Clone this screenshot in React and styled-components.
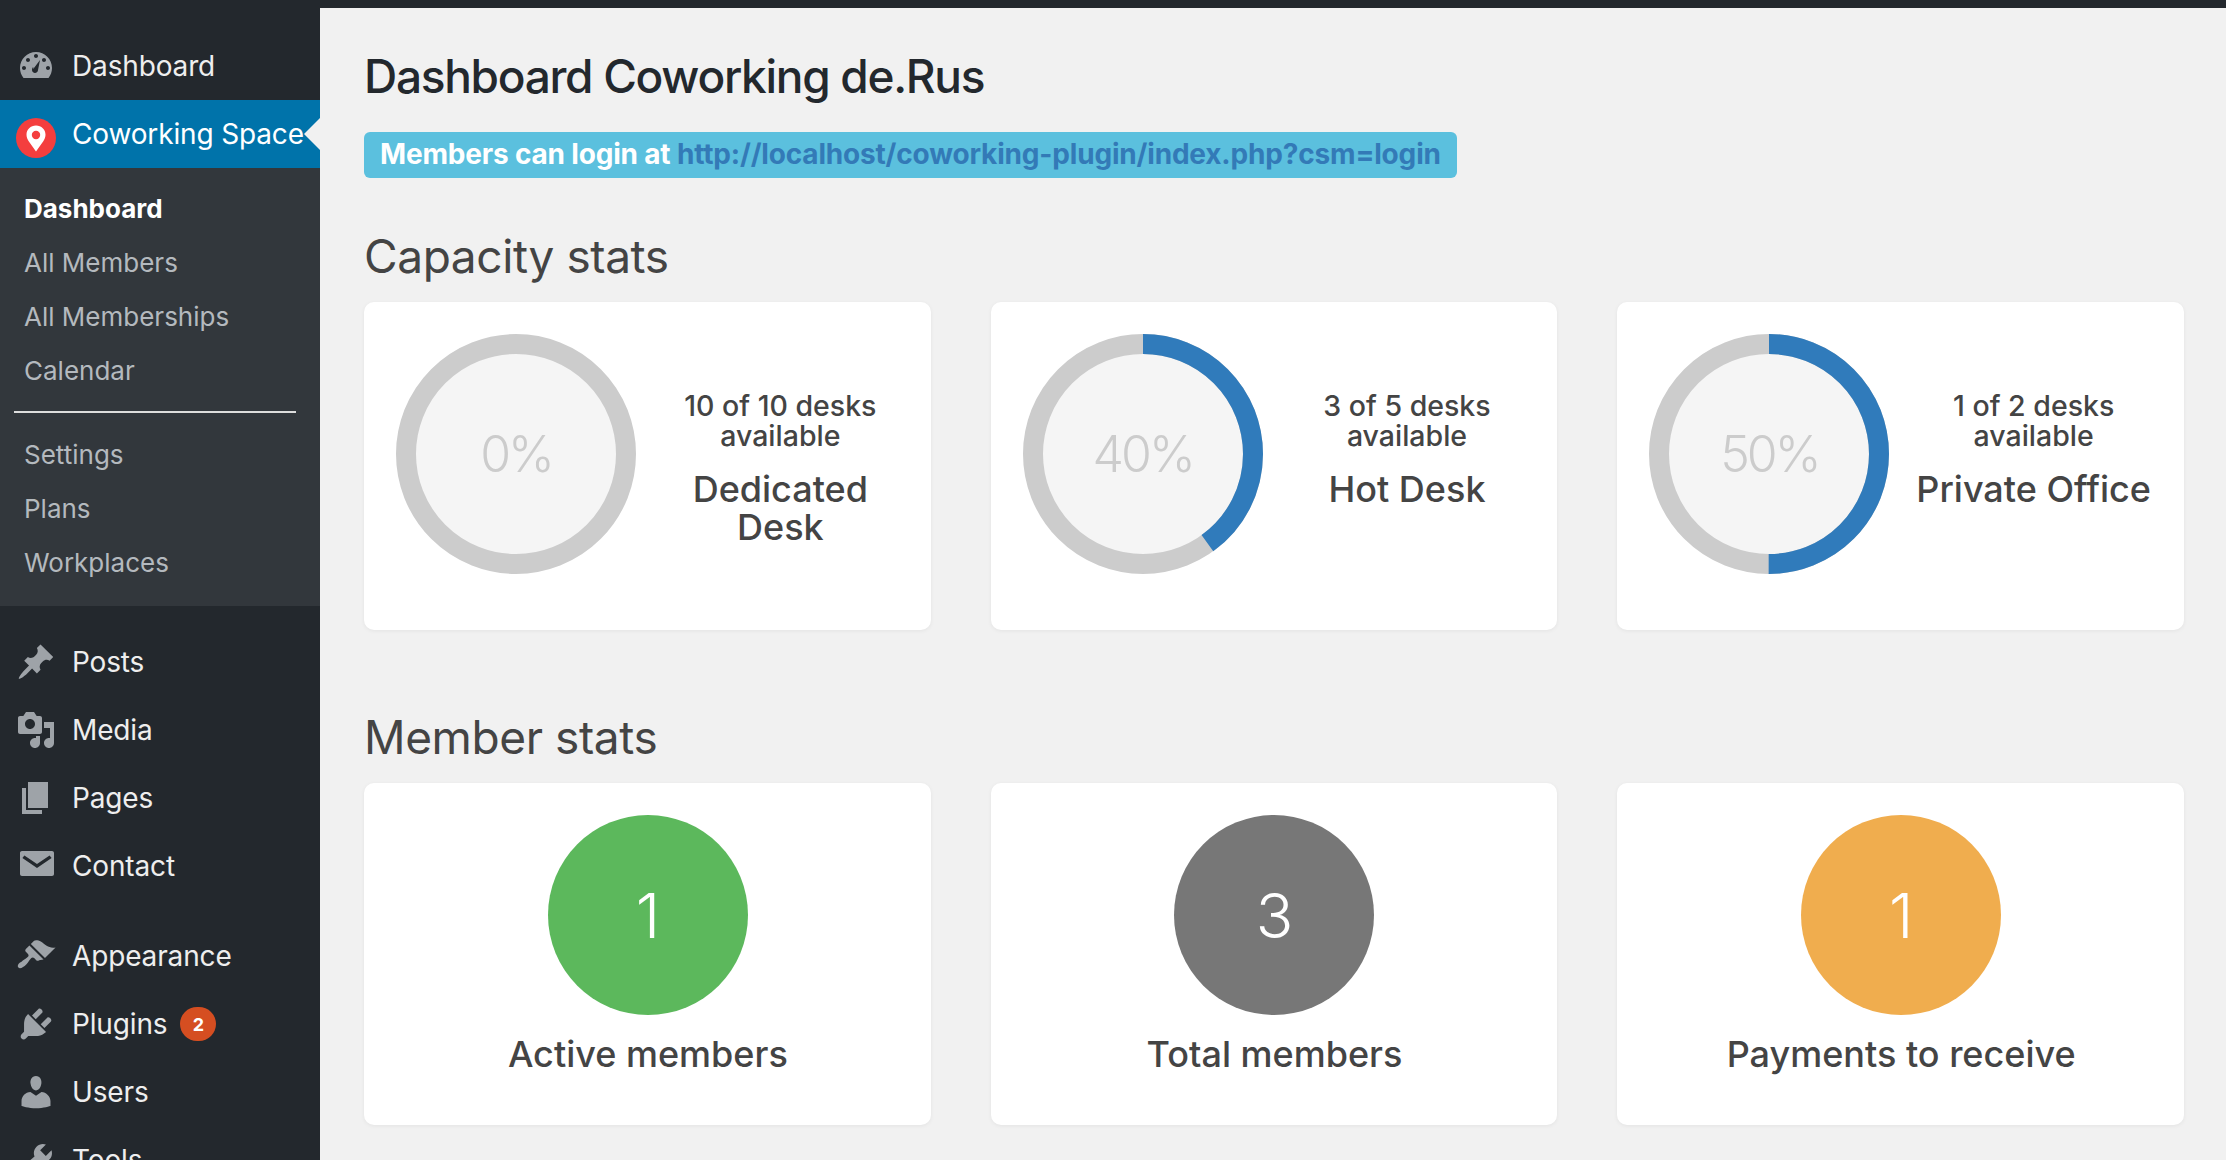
import styled, { createGlobalStyle } from "styled-components"

const GlobalStyle = createGlobalStyle`
    html, body {
        margin: 0;
        height: 100%;
        overflow: hidden;
        background: #f1f1f1;
    }
    * {
        box-sizing: border-box;
    }
`

const icons = {
    dashboard: "M3.76 16h12.48c1.1-1.37 1.76-3.11 1.76-5 0-4.42-3.58-8-8-8s-8 3.58-8 8c0 1.89.66 3.63 1.76 5zM10 4c.55 0 1 .45 1 1s-.45 1-1 1-1-.45-1-1 .45-1 1-1zM6 6c.55 0 1 .45 1 1s-.45 1-1 1-1-.45-1-1 .45-1 1-1zm8 0c.55 0 1 .45 1 1s-.45 1-1 1-1-.45-1-1 .45-1 1-1zm-5.370 5.550L12 7l-1 5c0 .83-.67 1.500-1.500 1.500S8 12.830 8 12c0-.57.24-1.080.63-1.450zM4 10c.55 0 1 .45 1 1s-.45 1-1 1-1-.45-1-1 .45-1 1-1zm12 0c.55 0 1 .45 1 1s-.45 1-1 1-1-.45-1-1 .45-1 1-1z",
    posts: "M10.44 3.02l1.82-1.82 6.36 6.35-1.83 1.82c-1.05-.68-2.48-.57-3.41.36l-.75.75c-.92.93-1.04 2.35-.35 3.41l-1.83 1.82-2.41-2.41-2.8 2.79c-.42.42-3.38 2.71-3.8 2.29s1.86-3.39 2.28-3.81l2.79-2.79L4.1 9.36l1.83-1.82c1.05.69 2.48.57 3.4-.36l.75-.75c.93-.92 1.05-2.35.36-3.41z",
    media: "M13 11V4c0-.55-.45-1-1-1h-1.67L9 1H5L3.67 3H2c-.55 0-1 .45-1 1v7c0 .55.45 1 1 1h10c.55 0 1-.45 1-1zM7 4.5c1.38 0 2.5 1.12 2.5 2.5S8.38 9.5 7 9.5 4.5 8.38 4.5 7 5.62 4.5 7 4.5zM14 6h5v10.5c0 1.38-1.12 2.5-2.5 2.5S14 17.88 14 16.5s1.12-2.5 2.5-2.5c.17 0 .34.02.5.05V9h-3V6zm-4 8.05V13h2v3.5c0 1.38-1.12 2.5-2.5 2.5S7 17.88 7 16.5 8.12 14 9.5 14c.17 0 .34.02.5.05z",
    pages: "M6 15V2h10v13H6zm-1 1h8v2H3V5h2v11z",
    contact: "M3 2.5h15c.55 0 1 .45 1 1v10.5c0 .55-.45 1-1 1H3c-.55 0-1-.45-1-1V3.500c0-.55.45-1 1-1zm1.200 2.200L3.200 6l7.300 5 7.300-5-1-1.300-6.300 4.300z",
    appearance: "M14.48 11.06L7.41 3.99l1.5-1.5c.5-.56 2.3-.47 3.51.32 1.21.8 1.43 1.28 2.91 2.1 1.18.64 2.45 1.26 4.45.85zm-.71.71L6.7 4.7 4.93 6.47c-.39.39-.39 1.02 0 1.41l1.06 1.06c.39.39.39 1.03 0 1.42-.6.6-1.43 1.11-2.21 1.69-.35.26-.7.53-1.01.84C1.43 13.23.4 14.95 1.2 15.8c.85.85 2.57-.18 3.92-1.54.31-.31.58-.66.85-1.02.57-.78 1.08-1.6 1.69-2.21.39-.39 1.02-.39 1.41 0l1.06 1.06c.39.39 1.02.39 1.41 0z",
    plugins: "M13.11 4.36L9.87 7.6 8 5.73l3.24-3.24c.35-.34 1.05-.2 1.56.32.52.51.66 1.21.31 1.55zm-8 1.77l.91-1.12 9.01 9.01-1.19.84c-.71.71-2.63 1.16-3.82 1.16H6.14L4.9 17.26c-.59.59-1.54.59-2.12 0-.59-.58-.59-1.53 0-2.12l1.24-1.24v-3.88c0-1.13.4-3.19 1.09-3.89zm7.26 3.97l3.24-3.24c.34-.35 1.04-.21 1.55.31.52.51.66 1.21.31 1.55l-3.24 3.25z",
    users: "M10 9.25c-2.27 0-2.73-3.44-2.73-3.44C7 4.02 7.82 2 9.97 2c2.16 0 2.98 2.02 2.71 3.81 0 0-.41 3.44-2.68 3.44zm0 2.57L12.72 10c2.39 0 4.52 2.33 4.52 4.53v2.49s-3.65 1.13-7.24 1.13c-3.65 0-7.24-1.13-7.24-1.13v-2.49c0-2.25 1.94-4.48 4.47-4.48z",
    tools: "M16.68 9.77c-1.34 1.34-3.3 1.67-4.95.99l-5.41 6.52c-.99.99-2.59.99-3.58 0s-.99-2.59 0-3.57l6.52-5.42c-.68-1.65-.35-3.61.99-4.95 1.28-1.28 3.12-1.62 4.72-1.06l-2.89 2.89 2.82 2.82 2.86-2.87c.53 1.58.18 3.39-1.08 4.65zM3.81 16.21c.4.39 1.04.39 1.43 0 .4-.4.4-1.04 0-1.43-.39-.4-1.03-.4-1.43 0-.39.39-.39 1.03 0 1.43z",
}

const capacity = [
    { percent: 0, free: "10 of 10 desks available", name: "Dedicated Desk" },
    { percent: 40, free: "3 of 5 desks available", name: "Hot Desk" },
    { percent: 50, free: "1 of 2 desks available", name: "Private Office" },
]

const members = [
    { value: 1, label: "Active members", color: "#5cb85c" },
    { value: 3, label: "Total members", color: "#777777" },
    { value: 1, label: "Payments to receive", color: "#f0ad4e" },
]

function MenuIcon({ name }) {
    return (
        <IconBox viewBox="0 0 20 20">
            <path d={icons[name]} fillRule="evenodd" fill="#9ea3a8" />
        </IconBox>
    )
}

function Ring({ percent }) {
    const length = 2 * Math.PI * 110
    return (
        <RingBox>
            <svg width="240" height="240" viewBox="0 0 240 240">
                <circle cx="120" cy="120" r="110" fill="#f5f5f5" stroke="#cccccc" strokeWidth="20" />
                {percent > 0 && (
                    <circle
                        cx="120"
                        cy="120"
                        r="110"
                        fill="none"
                        stroke="#307bbb"
                        strokeWidth="20"
                        strokeDasharray={`${(length * percent) / 100} ${length}`}
                        transform="rotate(-90 120 120)"
                    />
                )}
            </svg>
            <RingLabel>{percent}%</RingLabel>
        </RingBox>
    )
}

export default function App() {
    return (
        <>
            <GlobalStyle />
            <Page>
                <TopBar />
                <Body>
                    <Sidebar>
                        <MenuGroup $top={24}>
                            <MenuRow>
                                <MenuIcon name="dashboard" />
                                Dashboard
                            </MenuRow>
                            <MenuRow $active>
                                <PinBadge viewBox="0 0 40 40">
                                    <circle cx="20" cy="20" r="20" fill="#f43e3e" />
                                    <path
                                        d="M20 7.500c-5.400 0-9.500 4-9.500 9.200 0 2.500 1 4.500 2.200 6.600L20 33.500l7.300-10.200c1.200-2.100 2.200-4.100 2.200-6.600 0-5.200-4.100-9.200-9.500-9.200zm0 5.300a4.200 4.200 0 1 1 0 8.400 4.200 4.200 0 0 1 0-8.400z"
                                        fillRule="evenodd"
                                        fill="#ffffff"
                                    />
                                </PinBadge>
                                Coworking Space
                                <ActiveArrow />
                            </MenuRow>
                        </MenuGroup>
                        <SubMenu>
                            <SubRow $current>Dashboard</SubRow>
                            <SubRow>All Members</SubRow>
                            <SubRow>All Memberships</SubRow>
                            <SubRow>Calendar</SubRow>
                            <SubDivider />
                            <SubRow>Settings</SubRow>
                            <SubRow>Plans</SubRow>
                            <SubRow>Workplaces</SubRow>
                        </SubMenu>
                        <MenuGroup $top={22}>
                            <MenuRow><MenuIcon name="posts" />Posts</MenuRow>
                            <MenuRow><MenuIcon name="media" />Media</MenuRow>
                            <MenuRow><MenuIcon name="pages" />Pages</MenuRow>
                            <MenuRow><MenuIcon name="contact" />Contact</MenuRow>
                        </MenuGroup>
                        <MenuGroup $top={22}>
                            <MenuRow><MenuIcon name="appearance" />Appearance</MenuRow>
                            <MenuRow>
                                <MenuIcon name="plugins" />
                                Plugins
                                <CountBadge>2</CountBadge>
                            </MenuRow>
                            <MenuRow><MenuIcon name="users" />Users</MenuRow>
                            <MenuRow><MenuIcon name="tools" />Tools</MenuRow>
                        </MenuGroup>
                    </Sidebar>
                    <Content>
                        <Title>Dashboard Coworking de.Rus</Title>
                        <LoginNote>
                            Members can login at <NoteLink href="#">http://localhost/coworking-plugin/index.php?csm=login</NoteLink>
                        </LoginNote>
                        <SectionTitle $top={50}>Capacity stats</SectionTitle>
                        <CardGrid>
                            {capacity.map((desk) => (
                                <CapacityCard key={desk.name}>
                                    <Ring percent={desk.percent} />
                                    <DeskInfo>
                                        <DeskCount>{desk.free}</DeskCount>
                                        <DeskName>{desk.name}</DeskName>
                                    </DeskInfo>
                                </CapacityCard>
                            ))}
                        </CardGrid>
                        <SectionTitle $top={79}>Member stats</SectionTitle>
                        <CardGrid>
                            {members.map((stat) => (
                                <MemberCard key={stat.label}>
                                    <StatCircle $color={stat.color}>{stat.value}</StatCircle>
                                    <StatLabel>{stat.label}</StatLabel>
                                </MemberCard>
                            ))}
                        </CardGrid>
                    </Content>
                </Body>
            </Page>
        </>
    )
}

const Page = styled.div`
    display: flex;
    flex-direction: column;
    height: 100vh;
    overflow: hidden;
    font-family: Inter, "Liberation Sans", sans-serif;
    background: #f1f1f1;
`
const TopBar = styled.div`
    flex: none;
    height: 8px;
    background: #23282d;
`
const Body = styled.div`
    display: flex;
    flex: 1;
    min-height: 0;
`
const Sidebar = styled.nav`
    flex: none;
    width: 320px;
    background: #23282d;
    overflow: hidden;
`
const MenuGroup = styled.div`
    padding-top: ${(props) => props.$top}px;
`
const MenuRow = styled.div`
    position: relative;
    display: flex;
    align-items: center;
    gap: 16px;
    height: 68px;
    padding-left: 16px;
    font-size: 28px;
    letter-spacing: -0.15px;
    white-space: nowrap;
    color: ${(props) => (props.$active ? "#ffffff" : "#eeeeee")};
    background: ${(props) => (props.$active ? "#0073aa" : "transparent")};
`
const IconBox = styled.svg`
    flex: none;
    width: 40px;
    height: 40px;
`
const PinBadge = styled.svg`
    flex: none;
    width: 40px;
    height: 40px;
    margin-top: 8px;
`
const ActiveArrow = styled.span`
    position: absolute;
    top: 18px;
    right: 0;
    border: 16px solid transparent;
    border-right-color: #f1f1f1;
    border-left-width: 0;
`
const CountBadge = styled.span`
    display: flex;
    align-items: center;
    justify-content: center;
    width: 36px;
    height: 34px;
    margin-left: -3px;
    border-radius: 17px;
    font-size: 18px;
    font-weight: 700;
    color: #ffffff;
    background: #d54e21;
`
const SubMenu = styled.div`
    padding: 13px 0 17px;
    background: #32373c;
`
const SubRow = styled.div`
    display: flex;
    align-items: center;
    height: 54px;
    padding-left: 24px;
    font-size: 26px;
    font-weight: ${(props) => (props.$current ? 700 : 400)};
    color: ${(props) => (props.$current ? "#ffffff" : "#b4b9be")};
`
const SubDivider = styled.div`
    height: 2px;
    margin: 14px 24px 14px 14px;
    background: #dddddd;
`
const Content = styled.main`
    flex: 1;
    min-width: 0;
    padding: 40px 42px 0 44px;
`
const Title = styled.h1`
    margin: 0;
    font-size: 46px;
    line-height: 56px;
    font-weight: 500;
    letter-spacing: -1.3px;
    color: #23282d;
`
const LoginNote = styled.div`
    width: fit-content;
    height: 46px;
    margin-top: 28px;
    padding: 0 16px;
    border-radius: 6px;
    font-size: 28px;
    font-weight: 700;
    line-height: 44px;
    letter-spacing: -0.18px;
    white-space: nowrap;
    color: #ffffff;
    background: #5bc0de;
`
const NoteLink = styled.a`
    color: #337ab7;
    text-decoration: none;
`
const SectionTitle = styled.h2`
    margin: ${(props) => props.$top}px 0 0;
    font-size: 46px;
    line-height: 56px;
    font-weight: 400;
    letter-spacing: -0.4px;
    color: #444444;
`
const CardGrid = styled.div`
    display: grid;
    grid-template-columns: repeat(3, 1fr);
    gap: 60px;
    margin-top: 18px;
`
const Card = styled.div`
    border-radius: 10px;
    background: #ffffff;
    box-shadow: 0 1px 4px rgba(0, 0, 0, 0.06);
`
const CapacityCard = styled(Card)`
    display: flex;
    height: 328px;
    padding: 32px;
`
const RingBox = styled.div`
    position: relative;
    flex: none;
    width: 240px;
    height: 240px;
    svg {
        display: block;
    }
`
const RingLabel = styled.span`
    position: absolute;
    inset: 0;
    display: flex;
    align-items: center;
    justify-content: center;
    font-size: 50px;
    font-weight: 300;
    letter-spacing: -3px;
    color: #cccccc;
`
const DeskInfo = styled.div`
    flex: 1;
    min-width: 0;
    margin-left: 26px;
    padding-top: 57px;
    text-align: center;
    font-weight: 500;
    color: #444444;
`
const DeskCount = styled.div`
    font-size: 28.5px;
    line-height: 30px;
    padding: 0 18px;
`
const DeskName = styled.div`
    margin-top: 19px;
    font-size: 36px;
    line-height: 38px;
`
const MemberCard = styled(Card)`
    display: flex;
    flex-direction: column;
    align-items: center;
    height: 342px;
    padding: 32px 0 0 1px;
`
const StatCircle = styled.div`
    display: flex;
    align-items: center;
    justify-content: center;
    width: 200px;
    height: 200px;
    border-radius: 50%;
    font-size: 62px;
    font-weight: 300;
    color: #ffffff;
    background: ${(props) => props.$color};
`
const StatLabel = styled.div`
    margin-top: 17px;
    font-size: 36px;
    line-height: 44px;
    font-weight: 500;
    color: #444444;
`
